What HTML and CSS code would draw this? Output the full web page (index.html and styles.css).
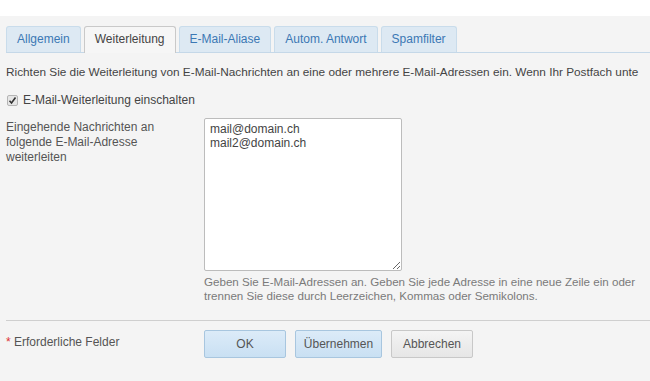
FILE: index.html
```html
<!DOCTYPE html>
<html lang="de">
<head>
    <meta charset="UTF-8">
    <title>E-Mail-Weiterleitung</title>
    <link rel="stylesheet" href="styles.css">
</head>
<body>

<div class="page">
    <ul class="tabs">
        <li class="tab">Allgemein</li>
        <li class="tab active">Weiterleitung</li>
        <li class="tab">E-Mail-Aliase</li>
        <li class="tab">Autom. Antwort</li>
        <li class="tab">Spamfilter</li>
    </ul>

    <p class="intro">Richten Sie die Weiterleitung von E-Mail-Nachrichten an eine oder mehrere E-Mail-Adressen ein. Wenn Ihr Postfach unte</p>

    <label class="check">
        <input type="checkbox" checked>
        <span>E-Mail-Weiterleitung einschalten</span>
    </label>

    <div class="field">
        <div class="field-label">Eingehende Nachrichten an folgende E-Mail-Adresse weiterleiten</div>
        <div class="field-input">
            <textarea spellcheck="false">mail@domain.ch
mail2@domain.ch</textarea>
            <div class="hint">Geben Sie E-Mail-Adressen an. Geben Sie jede Adresse in eine neue Zeile ein oder trennen Sie diese durch Leerzeichen, Kommas oder Semikolons.</div>
        </div>
    </div>

    <div class="footer">
        <div class="required"><span class="star">*</span> Erforderliche Felder</div>
        <div class="buttons">
            <button class="btn primary ok">OK</button>
            <button class="btn primary apply">Übernehmen</button>
            <button class="btn cancel">Abbrechen</button>
        </div>
    </div>
</div>

</body>
</html>
```

FILE: styles.css
```css
body {
    margin: 0;
    background-color: #fff;
    font-family: "Liberation Sans", Arial, sans-serif;
    font-size: 12px;
    color: #444;
}
.page {
    margin-top: 16px;
    background-color: #f4f4f4;
    height: 365px;
    padding: 10px 0 0 6px;
    box-sizing: border-box;
    overflow: hidden;
}
.tabs {
    list-style: none;
    margin: 0;
    padding: 0;
    display: flex;
    gap: 3px;
    border-bottom: 1px solid #c5d8e8;
    white-space: nowrap;
}
.tab {
    height: 25px;
    line-height: 25px;
    padding: 0 10px;
    background-color: #dde9f3;
    border: 1px solid #c9dceb;
    border-bottom: none;
    border-radius: 3px 3px 0 0;
    color: #3b78b4;
    margin-bottom: -1px;
}
.tab.active {
    background-color: #f6f6f6;
    border-color: #c9c9c9;
    color: #444;
    height: 26px;
}
.intro {
    margin: 12px 0 0;
    white-space: nowrap;
    font-size: 11.8px;
    color: #444;
}
.check {
    display: flex;
    align-items: center;
    margin-top: 14px;
}
.check input {
    appearance: none;
    margin: 0 5px 0 1px;
    width: 11px;
    height: 11px;
    box-sizing: border-box;
    border: 1px solid #b5b5b5;
    border-radius: 2px;
    background: #e6e6e6 url("data:image/svg+xml,%3Csvg xmlns='http://www.w3.org/2000/svg' viewBox='0 0 11 11'%3E%3Cpath d='M2.5 5.8 L4.5 8 L8.5 2.5' fill='none' stroke='%23333' stroke-width='1.6'/%3E%3C/svg%3E") center / 11px 11px no-repeat;
}
.field {
    display: flex;
    margin-top: 11px;
}
.field-label {
    flex-shrink: 0;
    width: 160px;
    margin-right: 38px;
    line-height: 15px;
    color: #555;
    padding-top: 2px;
}
.field-input textarea {
    display: block;
    width: 198px;
    height: 153px;
    box-sizing: border-box;
    border: 1px solid #bcbcbc;
    border-radius: 2px;
    background: #fff;
    font-family: inherit;
    font-size: 12px;
    line-height: 14px;
    color: #444;
    padding: 3px 5px;
    resize: both;
}
.hint {
    margin-top: 4px;
    line-height: 14px;
    font-size: 11.6px;
    color: #7a7a7a;
}
.footer {
    display: flex;
    border-top: 1px solid #cfcfcf;
    margin-top: 17px;
    padding-top: 9px;
}
.required {
    width: 198px;
    padding-top: 5px;
    color: #555;
}
.star {
    color: #d33;
}
.buttons {
    display: flex;
    gap: 9px;
}
.btn {
    height: 28px;
    padding: 0;
    font-family: inherit;
    font-size: 12px;
    color: #555;
    background: linear-gradient(#f4f4f4, #e6e6e6);
    border: 1px solid #c8c8c8;
    border-radius: 2px;
}
.btn.primary {
    background: linear-gradient(#dcebf8, #c9e0f3);
    border-color: #a8c6df;
}
.btn.ok,
.btn.cancel {
    width: 82px;
}
.btn.apply {
    width: 87px;
}
```
